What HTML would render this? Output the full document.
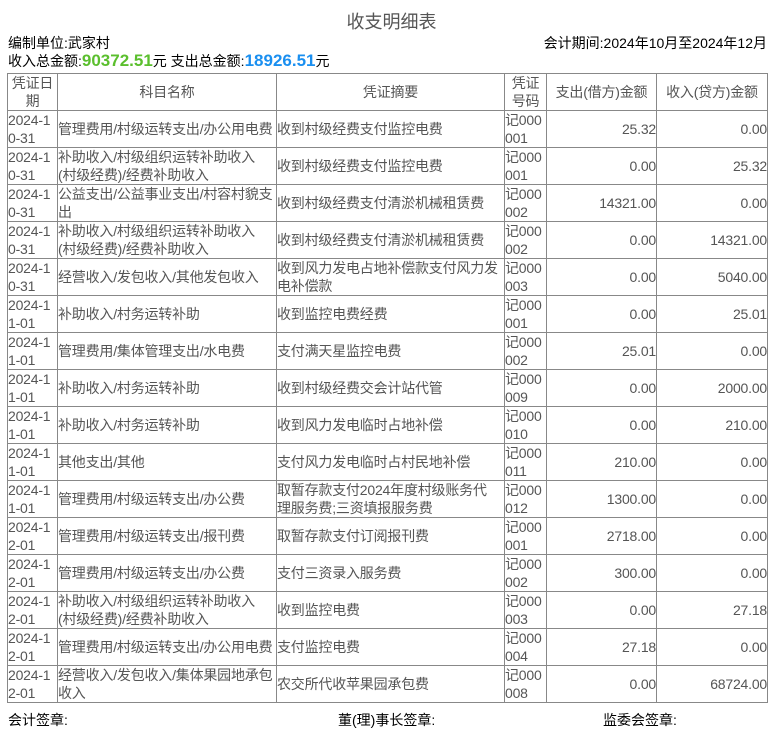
<!DOCTYPE html>
<html><head><meta charset="utf-8"><style>
body{margin:0;background:#fff;font-family:"Liberation Sans","Noto Sans CJK SC",sans-serif;color:#000;font-size:14px;width:783px;height:737px;overflow:hidden;position:relative}
.t{position:absolute;top:8px;left:0;width:783px;text-align:center;font-size:18px;color:#555}
.a{position:absolute;left:8px;top:33px;font-size:14px}
.b{position:absolute;right:16px;top:33px;font-size:14px}
.c{position:absolute;left:8px;top:51px;font-size:14px}
.c b{font-size:17px}
table{position:absolute;left:7px;top:73px;border-collapse:collapse;table-layout:fixed;width:760px;color:#555}
td,th{border:1px solid #888;padding:0;font-weight:normal;line-height:18px;font-size:14px;overflow:hidden;white-space:nowrap;letter-spacing:-0.2px}
th{text-align:center;height:36px}
td{height:36px}
td.n{text-align:right}
.f{position:absolute;top:710px;font-size:14px}
</style></head><body>
<div class="t">收支明细表</div>
<div class="a">编制单位:武家村</div>
<div class="b">会计期间:2024年10月至2024年12月</div>
<div class="c">收入总金额:<b style="color:#5bbf2e">90372.51</b>元 支出总金额:<b style="color:#1a8ff0">18926.51</b>元</div>
<table>
<colgroup><col style="width:50px"><col style="width:219px"><col style="width:228px"><col style="width:42px"><col style="width:110px"><col style="width:111px"></colgroup>
<tr><th>凭证日<br>期</th><th>科目名称</th><th>凭证摘要</th><th>凭证<br>号码</th><th>支出(借方)金额</th><th>收入(贷方)金额</th></tr>
<tr><td>2024-1<br>0-31</td><td>管理费用/村级运转支出/办公用电费</td><td>收到村级经费支付监控电费</td><td>记000<br>001</td><td class="n">25.32</td><td class="n">0.00</td></tr>
<tr><td>2024-1<br>0-31</td><td>补助收入/村级组织运转补助收入<br>(村级经费)/经费补助收入</td><td>收到村级经费支付监控电费</td><td>记000<br>001</td><td class="n">0.00</td><td class="n">25.32</td></tr>
<tr><td>2024-1<br>0-31</td><td>公益支出/公益事业支出/村容村貌支<br>出</td><td>收到村级经费支付清淤机械租赁费</td><td>记000<br>002</td><td class="n">14321.00</td><td class="n">0.00</td></tr>
<tr><td>2024-1<br>0-31</td><td>补助收入/村级组织运转补助收入<br>(村级经费)/经费补助收入</td><td>收到村级经费支付清淤机械租赁费</td><td>记000<br>002</td><td class="n">0.00</td><td class="n">14321.00</td></tr>
<tr><td>2024-1<br>0-31</td><td>经营收入/发包收入/其他发包收入</td><td>收到风力发电占地补偿款支付风力发<br>电补偿款</td><td>记000<br>003</td><td class="n">0.00</td><td class="n">5040.00</td></tr>
<tr><td>2024-1<br>1-01</td><td>补助收入/村务运转补助</td><td>收到监控电费经费</td><td>记000<br>001</td><td class="n">0.00</td><td class="n">25.01</td></tr>
<tr><td>2024-1<br>1-01</td><td>管理费用/集体管理支出/水电费</td><td>支付满天星监控电费</td><td>记000<br>002</td><td class="n">25.01</td><td class="n">0.00</td></tr>
<tr><td>2024-1<br>1-01</td><td>补助收入/村务运转补助</td><td>收到村级经费交会计站代管</td><td>记000<br>009</td><td class="n">0.00</td><td class="n">2000.00</td></tr>
<tr><td>2024-1<br>1-01</td><td>补助收入/村务运转补助</td><td>收到风力发电临时占地补偿</td><td>记000<br>010</td><td class="n">0.00</td><td class="n">210.00</td></tr>
<tr><td>2024-1<br>1-01</td><td>其他支出/其他</td><td>支付风力发电临时占村民地补偿</td><td>记000<br>011</td><td class="n">210.00</td><td class="n">0.00</td></tr>
<tr><td>2024-1<br>1-01</td><td>管理费用/村级运转支出/办公费</td><td>取暂存款支付2024年度村级账务代<br>理服务费;三资填报服务费</td><td>记000<br>012</td><td class="n">1300.00</td><td class="n">0.00</td></tr>
<tr><td>2024-1<br>2-01</td><td>管理费用/村级运转支出/报刊费</td><td>取暂存款支付订阅报刊费</td><td>记000<br>001</td><td class="n">2718.00</td><td class="n">0.00</td></tr>
<tr><td>2024-1<br>2-01</td><td>管理费用/村级运转支出/办公费</td><td>支付三资录入服务费</td><td>记000<br>002</td><td class="n">300.00</td><td class="n">0.00</td></tr>
<tr><td>2024-1<br>2-01</td><td>补助收入/村级组织运转补助收入<br>(村级经费)/经费补助收入</td><td>收到监控电费</td><td>记000<br>003</td><td class="n">0.00</td><td class="n">27.18</td></tr>
<tr><td>2024-1<br>2-01</td><td>管理费用/村级运转支出/办公用电费</td><td>支付监控电费</td><td>记000<br>004</td><td class="n">27.18</td><td class="n">0.00</td></tr>
<tr><td>2024-1<br>2-01</td><td>经营收入/发包收入/集体果园地承包<br>收入</td><td>农交所代收苹果园承包费</td><td>记000<br>008</td><td class="n">0.00</td><td class="n">68724.00</td></tr>
</table>
<div class="f" style="left:8px">会计签章:</div>
<div class="f" style="left:338px">董(理)事长签章:</div>
<div class="f" style="left:603px">监委会签章:</div>
</body></html>
